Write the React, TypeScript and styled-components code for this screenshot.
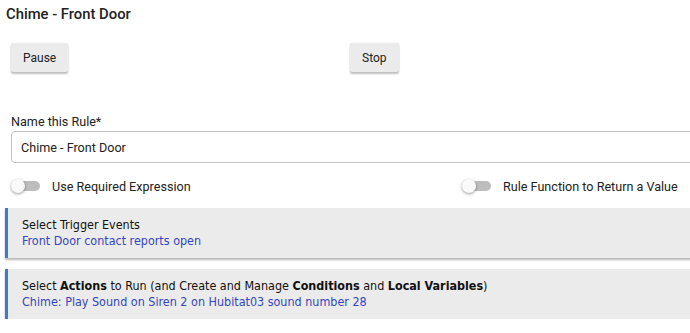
import React from "react";
import styled, { createGlobalStyle } from "styled-components";

const Global = createGlobalStyle`
  html, body { margin: 0; padding: 0; background: #fff; overflow: hidden; }
  body { font-family: Roboto, "Liberation Sans", sans-serif; color: #222; }
`;

const Page = styled.div`
  width: 760px;
  padding: 5px 0 0 5px;
  box-sizing: border-box;
`;

const Title = styled.h1`
  margin: 0 0 0 1px;
  font-family: Roboto, sans-serif;
  font-weight: 500;
  font-size: 14.8px;
  line-height: 18px;
  color: #222;
`;

const ButtonRow = styled.div`
  display: grid;
  grid-template-columns: 339px auto;
  justify-items: start;
  padding: 20px 0 0 6px;
`;

const Button = styled.button`
  font-family: Roboto, sans-serif;
  font-size: 12px;
  color: #222;
  background: #ebebeb;
  border: none;
  border-radius: 2px;
  height: 29px;
  padding: 0 12px;
  box-shadow: 0 2px 2px rgba(0,0,0,0.25), 0 0 1px rgba(0,0,0,0.12);
`;

const Field = styled.div`
  display: flex;
  flex-direction: column;
  padding: 42px 0 0 6px;
`;

const Label = styled.label`
  font-family: Roboto, sans-serif;
  font-size: 12.6px;
  line-height: 16px;
  color: #222;
  margin-bottom: 1px;
`;

const Input = styled.div`
  height: 32px;
  box-sizing: border-box;
  border: 1px solid #c4c4c4;
  border-radius: 4px;
  padding: 0 9px;
  display: flex;
  align-items: center;
  font-family: Roboto, sans-serif;
  font-size: 12.6px;
  color: #222;
`;

const ToggleRow = styled.div`
  display: grid;
  grid-template-columns: 451px auto;
  padding: 15px 0 0 6px;
  height: 16px;
`;

const Toggle = styled.div`
  display: flex;
  align-items: center;
  gap: 12px;
  font-family: Roboto, sans-serif;
  font-size: 12.6px;
  color: #222;
`;

const Switch = styled.span`
  position: relative;
  width: 29px;
  height: 14px;
  display: inline-block;
  &::before {
    content: "";
    position: absolute;
    left: 4px;
    right: 0;
    top: 2px;
    height: 10px;
    border-radius: 5px;
    background: #bdbdbd;
  }
  &::after {
    content: "";
    position: absolute;
    left: 0;
    top: 0;
    width: 14px;
    height: 14px;
    border-radius: 50%;
    background: #fafafa;
    box-shadow: 0 1px 3px rgba(0,0,0,0.4);
  }
`;

const Panel = styled.div<{ $mt: number }>`
  margin-top: ${(p) => p.$mt}px;
  background: #ebebeb;
  border-left: 3px solid #3b7bd1;
  height: 50px;
  box-sizing: border-box;
  padding: 9px 0 0 14px;
  box-shadow: 0 2px 2px rgba(0,0,0,0.28);
  font-family: "DejaVu Sans", Verdana, sans-serif;
  font-stretch: condensed;
  font-size: 12.45px;
  line-height: 16px;
`;

const PanelTitle = styled.div`
  color: #111;
  b { font-weight: bold; }
`;

const PanelLink = styled.div`
  color: #3346c0;
`;

export default function App() {
  return (
    <>
      <Global />
      <Page>
        <Title>Chime - Front Door</Title>
        <ButtonRow>
          <Button>Pause</Button>
          <Button>Stop</Button>
        </ButtonRow>
        <Field>
          <Label>Name this Rule*</Label>
          <Input>Chime - Front Door</Input>
        </Field>
        <ToggleRow>
          <Toggle><Switch />Use Required Expression</Toggle>
          <Toggle><Switch />Rule Function to Return a Value</Toggle>
        </ToggleRow>
        <Panel $mt={14}>
          <PanelTitle>Select Trigger Events</PanelTitle>
          <PanelLink>Front Door contact reports open</PanelLink>
        </Panel>
        <Panel $mt={11}>
          <PanelTitle>
            Select <b>Actions</b> to Run (and Create and Manage <b>Conditions</b> and <b>Local Variables</b>)
          </PanelTitle>
          <PanelLink>Chime: Play Sound on Siren 2 on Hubitat03 sound number 28</PanelLink>
        </Panel>
      </Page>
    </>
  );
}
